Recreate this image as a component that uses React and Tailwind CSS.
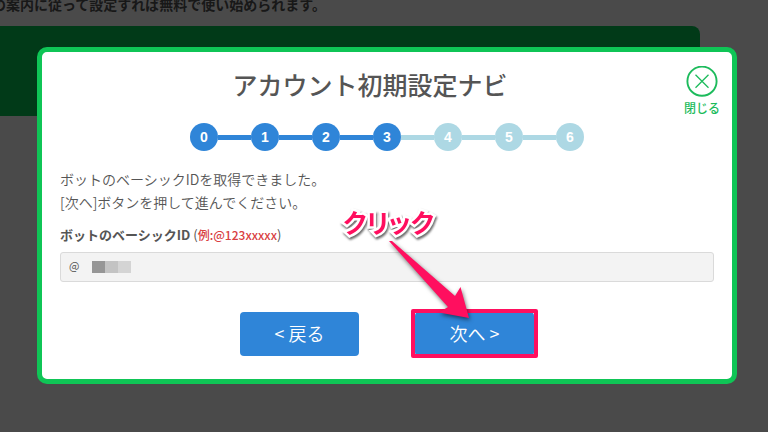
import { useState } from 'react'

const STEPS = [0, 1, 2, 3, 4, 5, 6]

function StepBar({ current }) {
  return (
    <ol className="flex items-center justify-center font-['Liberation_Sans',sans-serif]">
      {STEPS.map(step => (
        <li key={step} className="flex items-center">
          {step > 0 && (
            <span className={`w-[33px] h-[5px] ${step <= current ? 'bg-[#2f85d8]' : 'bg-[#add8e4]'}`} />
          )}
          <span
            className={`w-7 h-7 rounded-full flex items-center justify-center text-sm font-bold text-white ${
              step <= current ? 'bg-[#2f85d8]' : 'bg-[#add8e4]'
            }`}
          >
            {step}
          </span>
        </li>
      ))}
    </ol>
  )
}

function CloseButton({ onClick }) {
  return (
    <button onClick={onClick} className="flex flex-col items-center w-10 text-[#1dbb5c]">
      <svg width="32" height="32" viewBox="0 0 32 32" fill="none" stroke="currentColor">
        <circle cx="16" cy="15.2" r="14.6" strokeWidth="1.9" />
        <path d="M9.5 8.7 L22.5 21.7 M22.5 8.7 L9.5 21.7" strokeWidth="1.3" />
      </svg>
      <span className="text-xs leading-5 font-medium whitespace-nowrap">閉じる</span>
    </button>
  )
}

// Label and arrow that point at the next button
function ClickGuide() {
  return (
    <div className="absolute -left-20 -top-[110px] w-[150px] h-[125px] pointer-events-none">
      <svg className="absolute inset-0 overflow-visible drop-shadow-[1px_2px_2px_rgba(0,0,0,0.55)]" width="150" height="125" viewBox="0 0 150 125">
        <path d="M54 39 L57 39 L120 94 L125.5 85 L134 116 L104 110.5 L113 105 Z" fill="#ff0f5f" />
      </svg>
      <span className="absolute left-2 top-0 text-[26px] leading-10 font-bold text-[#ff0f5f] whitespace-nowrap [font-feature-settings:'palt'] [-webkit-text-stroke:5px_white] [paint-order:stroke_fill] drop-shadow-[1px_2px_1px_rgba(0,0,0,0.6)]">
        クリック
      </span>
    </div>
  )
}

export default function App() {
  const [step, setStep] = useState(3)
  const [open, setOpen] = useState(true)
  const [botId, setBotId] = useState('@')

  return (
    <div className="min-h-screen bg-white overflow-hidden font-['Noto_Sans_CJK_JP',sans-serif]">
      <p className="-mt-2 -ml-2 h-[34px] text-sm leading-6 font-bold text-[#555] whitespace-nowrap">
        の案内に従って設定すれば無料で使い始められます。
      </p>
      <div className="h-[90px] mr-[68px] rounded-r-lg bg-[#06c755]" />

      {open && (
        <div className="fixed inset-0 flex items-start bg-black/71 pt-[47px] pl-[37px] pr-[31px]">
          <div role="dialog" aria-labelledby="navi-title" className="flex-1 bg-white border-5 border-[#0fc556] rounded-[10px] text-[#555]">
            <div className="flex items-start pl-4 pr-2.5 pt-3.5">
              <h1 id="navi-title" className="flex-1 text-center text-[25px] leading-9 font-medium">
                アカウント初期設定ナビ
              </h1>
              <CloseButton onClick={() => setOpen(false)} />
            </div>

            <div className="pt-[5px]">
              <StepBar current={step} />
            </div>

            <div className="px-[18px] pt-[17px] pb-[23px]">
              <p className="text-sm leading-[23px] font-[350]">
                ボットのベーシックIDを取得できました。
                <br />
                [次へ]ボタンを押して進んでください。
              </p>
              <label htmlFor="bot-id" className="block mt-[9px] text-[13px] leading-6">
                <span className="font-bold">ボットのベーシックID</span> (
                <span className="text-xs font-medium text-[#d9403f]">例:@123xxxxx</span>)
              </label>
              <div className="relative mt-[5px]">
                <input
                  id="bot-id"
                  value={botId}
                  onChange={e => setBotId(e.target.value)}
                  className="block w-full h-[30px] px-2 pb-1 text-[11px] bg-[#f3f3f3] border border-[#dadada] rounded-[3px]"
                />
                <div className="absolute left-8 top-[9px] flex">
                  <span className="w-[13px] h-3 bg-[#969696]" />
                  <span className="w-[13px] h-3 bg-[#c3c3c3]" />
                  <span className="w-[13px] h-3 bg-[#d4d4d4]" />
                </div>
              </div>

              <div className="flex justify-center gap-14 mt-[30px]">
                <button
                  onClick={() => setStep(Math.max(step - 1, 0))}
                  className="w-[119px] h-11 rounded bg-[#2f85d8] text-white text-lg font-[350] pb-0.5"
                >
                  &lt; 戻る
                </button>
                <div className="relative">
                  <button
                    onClick={() => setStep(Math.min(step + 1, 6))}
                    className="w-[119px] h-11 rounded bg-[#2f85d8] text-white text-lg font-[350] pb-0.5"
                  >
                    次へ &gt;
                  </button>
                  <div className="absolute -inset-x-1 -top-[3px] -bottom-0.5 border-4 border-[#ff0f5f] rounded-xs pointer-events-none" />
                  <ClickGuide />
                </div>
              </div>
            </div>
          </div>
        </div>
      )}
    </div>
  )
}
